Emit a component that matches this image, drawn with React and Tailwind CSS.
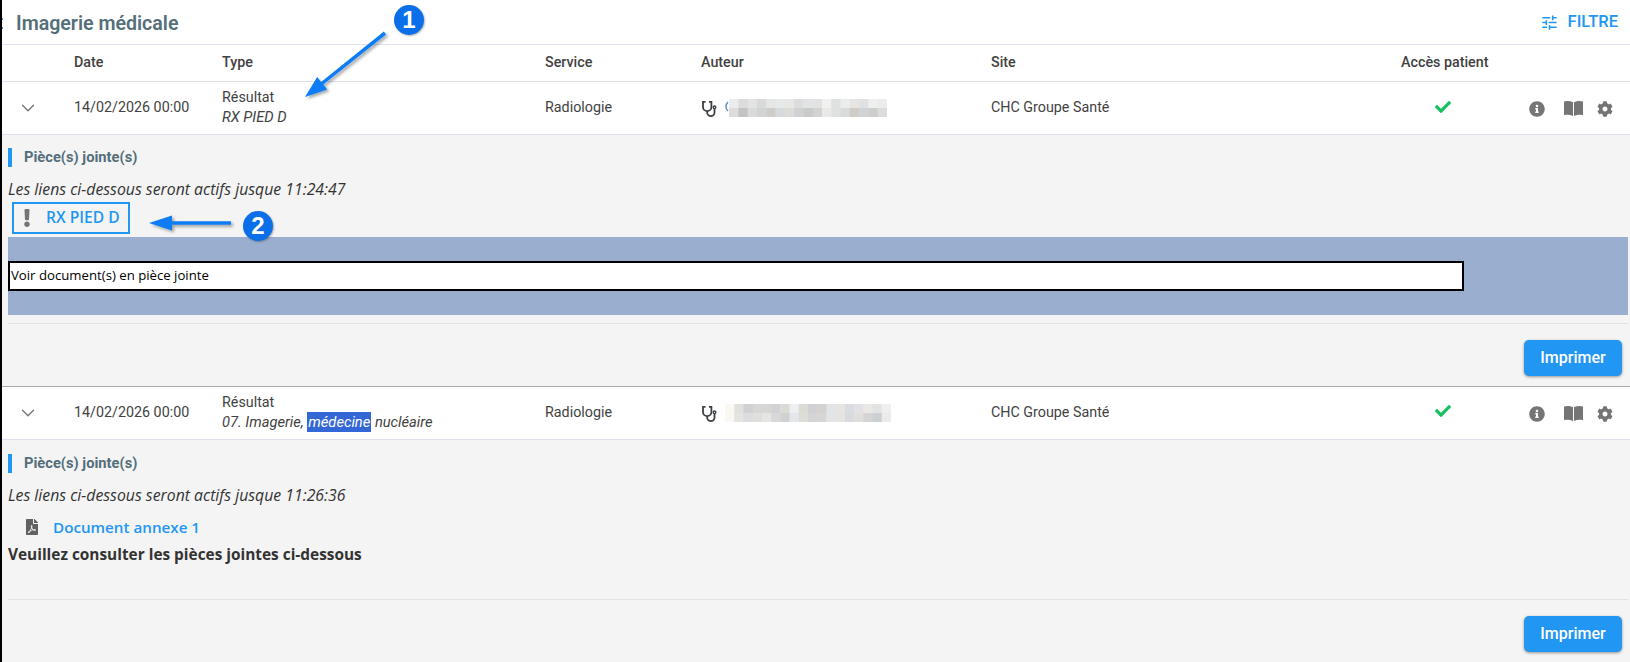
import React from "react";
import { FaInfoCircle, FaCog, FaCheck, FaFilePdf, FaExclamation } from "react-icons/fa";
import { ChevronDown } from "lucide-react";

const GRID = "grid grid-cols-[72px_148px_323px_156px_290px_410px_1fr] items-center";

const blur1 = [
  ["#eaecee", "#dcdcdc", "#e2e3e2", "#d8d9d9", "#e5e6e6", "#e6e8ea", "#e8e7e6", "#dedcdc", "#e1e3e7", "#e2e2e0", "#f0f1f0", "#dfe1e0", "#ebecec", "#e6e5e3", "#dfe1e3", "#eeefef", "#ececec"],
  ["#dddddd", "#c4c3c1", "#d9dbdb", "#d2d4d4", "#cfcdca", "#d6dadc", "#dedcd9", "#cfd1d3", "#c9cbca", "#d3d2d0", "#e8eae8", "#dfe1e1", "#d9dbda", "#cfccc8", "#cfd3d6", "#cdcdcb", "#dcdcdc"],
];

const blur2 = [
  ["#fbf8f3", "#e0e2e0", "#cfcfd4", "#d8d7d5", "#d6d6d4", "#d2d2d4", "#dbdbd6", "#eeeff1", "#dcdcd6", "#d0cfd3", "#d5d3d2", "#e2e4e7", "#e7e5e2", "#dadcdf", "#e2e2e4", "#e9e8e4", "#e2e3e3", "#efefef"],
  ["#fbf8f3", "#e4e4e2", "#dcdcdf", "#e0dfdd", "#e5e5e3", "#d9d7d9", "#d0d2d1", "#e4e7ea", "#dcddd6", "#d4d3d6", "#d8d6d5", "#e2e4e6", "#e6e4e1", "#d8dadd", "#dfe0dc", "#d6d3d3", "#cbd0d4", "#ebebeb"],
];

const Blur = ({ rows, width }) => {
  const cell = width / rows[0].length;
  return (
    <svg width={width} height="18" className="shrink-0">
      {rows.map((row, y) =>
        row.map((c, x) => (
          <rect key={x + "-" + y} x={x * cell} y={y * 9} width={cell + 0.5} height="9" fill={c} />
        ))
      )}
    </svg>
  );
};

const BookIcon = () => (
  <svg width="19" height="16" viewBox="0 0 19 16" fill="#757575">
    <path d="M0 1.500C3 .6 6.200.8 9 2.200V16C6.200 14.700 3 14.400 0 15.200zM19 1.500C16 .6 12.800.8 10 2.200V16c2.800-1.300 6-1.600 9-.8z" />
  </svg>
);

const StethoIcon = () => (
  <svg width="17" height="17" viewBox="0 0 17 17" fill="none" stroke="#3c4043" strokeWidth="1.800" className="shrink-0">
    <path d="M4.500 1.800H2V7a4.200 4.200 0 0 0 8.400 0V1.800H8" />
    <path d="M6.200 11.200v1.300a3.500 3.500 0 0 0 7.300 0V9" />
    <circle cx="13.500" cy="7.300" r="1.300" strokeWidth="1.400" />
  </svg>
);

const Row = ({ type, blur, blurWidth, gapClass, checkClass }) => (
  <div className={GRID + " h-[53px] bg-white border-b border-[#e0e0ee] text-[14.3px] text-[#424242]"}>
    <div className="pl-[15px] text-[#757575]">
      <ChevronDown size={22} strokeWidth={1.5} />
    </div>
    <div>14/02/2026 00:00</div>
    <div className="leading-[20px] -translate-y-px">
      <div>Résultat</div>
      <div className="italic text-[14.7px]">{type}</div>
    </div>
    <div>Radiologie</div>
    <div className={"flex items-center " + gapClass}>
      <StethoIcon />
      <Blur rows={blur} width={blurWidth} />
    </div>
    <div>CHC Groupe Santé</div>
    <div className={"w-[84px] flex justify-center text-[#16c060] " + checkClass}>
      <FaCheck size={16} />
    </div>
  </div>
);

const Actions = () => (
  <div className="absolute right-[17px] top-0 h-full flex items-center text-[#757575]">
    <FaInfoCircle size={16} />
    <div className="ml-[19px] mr-[14px] -translate-y-px">
      <BookIcon />
    </div>
    <FaCog size={16} />
  </div>
);

const AttachmentTitle = () => (
  <div className="flex items-center h-[19px] border-l-4 border-[#2196f3] pl-[12px] font-['Roboto',sans-serif] font-bold text-[14.7px] text-[#546e7a]">
    Pièce(s) jointe(s)
  </div>
);

const PrintButton = () => (
  <div className="flex justify-end pr-[8px]">
    <button className="w-[98px] h-[36px] rounded-[5px] bg-[#2196f3] text-white text-[16px] font-medium shadow-[0_1px_3px_rgba(0,0,0,0.4)]">
      Imprimer
    </button>
  </div>
);

const Annotation = ({ className, n }) => (
  <div className={"absolute w-[30px] h-[30px] rounded-full bg-[#0a6fe8] text-white flex items-center justify-center font-['Liberation_Sans',sans-serif] font-bold text-[24px] shadow-[1px_1px_2px_rgba(0,0,0,0.3)] " + className}>
    {n}
  </div>
);

export default function App() {
  return (
    <div className="relative w-[1630px] h-[662px] overflow-hidden flex bg-[#f4f4f4] font-['Roboto',sans-serif]">
      <div className="w-[2px] bg-black shrink-0" />
      <div className="flex-1 min-w-0">
        <div className="h-[45px] bg-white border-b border-[#e0e0ee] flex items-center justify-between pl-[14px] pr-[12px]">
          <h1 className="text-[19.6px] font-semibold text-[#546e7a] translate-y-[2px]">Imagerie médicale</h1>
          <div className="flex items-center gap-[9px] text-[#2196f3] text-[16.5px] font-medium">
            <svg width="19" height="19" viewBox="0 0 24 24" fill="currentColor">
              <path d="M3 17v2h6v-2H3zM3 5v2h10V5H3zm10 16v-2h8v-2h-8v-2h-2v6h2zM7 9v2H3v2h4v2h2V9H7zm14 4v-2H11v2h10zm-6-4h2V7h4V5h-4V3h-2v6z" />
            </svg>
            FILTRE
          </div>
        </div>
        <div className={GRID + " h-[37px] bg-white border-b border-[#e0e0ee] text-[14.3px] font-medium text-[#424242]"}>
          <div />
          <div>Date</div>
          <div>Type</div>
          <div>Service</div>
          <div>Auteur</div>
          <div>Site</div>
          <div className="whitespace-nowrap">Accès patient</div>
        </div>

        <div className="relative">
          <Row type="RX PIED D" blur={blur1} blurWidth={158} gapClass="gap-[11px]" checkClass="-translate-y-px" />
          <Actions />
        </div>
        <div className="h-[252px] pl-[6px] pr-[2px] pt-[13px] border-b border-[#aaaaaa]">
          <AttachmentTitle />
          <p className="mt-[12px] font-['Open_Sans',sans-serif] italic text-[15.8px] leading-[20px] text-[#333333] whitespace-nowrap">
            Les liens ci-dessous seront actifs jusque 11:24:47
          </p>
          <div className="mt-[3px] ml-[4px] w-[118px] h-[32px] border-2 border-[#2196f3] flex items-center pl-[4px] gap-[10px]">
            <FaExclamation size={18} className="text-[#757575] shrink-0" />
            <span className="font-['Open_Sans',sans-serif] text-[15.6px] font-semibold text-[#2196f3] whitespace-nowrap">RX PIED D</span>
          </div>
          <div className="mt-[3px] h-[78px] bg-[#9aaed0] pt-[24px]">
            <div className="w-[1456px] h-[30px] bg-white border-2 border-black flex items-center pl-[1px] font-['Open_Sans',sans-serif] text-[13.2px] text-black">
              Voir document(s) en pièce jointe
            </div>
          </div>
          <div className="mt-[8px] h-px bg-[#e2e2e2]" />
          <div className="mt-[16px] -mr-[2px]">
            <PrintButton />
          </div>
        </div>

        <div className="relative">
          <Row
            type={
              <>
                07. Imagerie, <span className="inline-block bg-[#3367d6] text-white px-[1px]">médecine </span> nucléaire
              </>
            }
            blur={blur2}
            blurWidth={166}
            gapClass="gap-[7px]"
            checkClass="-translate-y-[2px]"
          />
          <Actions />
        </div>
        <div className="pl-[6px] pr-[2px] pt-[14px]">
          <AttachmentTitle />
          <p className="mt-[12px] font-['Open_Sans',sans-serif] italic text-[15.8px] leading-[20px] text-[#333333] whitespace-nowrap">
            Les liens ci-dessous seront actifs jusque 11:26:36
          </p>
          <div className="mt-[12px] ml-[16px] h-[20px] flex items-center gap-[13px]">
            <FaFilePdf size={16} className="text-[#616161]" />
            <span className="font-['Open_Sans',sans-serif] text-[15.2px] font-semibold text-[#2196f3]">Document annexe 1</span>
          </div>
          <p className="mt-[8px] font-['Open_Sans',sans-serif] font-bold text-[15.4px] leading-[20px] text-[#333333]">
            Veuillez consulter les pièces jointes ci-dessous
          </p>
          <div className="mt-[34px] h-px bg-[#e2e2e2]" />
          <div className="mt-[16px] -mr-[2px]">
            <PrintButton />
          </div>
        </div>
      </div>

      <svg className="absolute left-0 top-0 pointer-events-none" width="1630" height="662">
        <defs>
          <filter id="sh" x="-20%" y="-20%" width="140%" height="140%">
            <feDropShadow dx="2" dy="2" stdDeviation="1.5" floodColor="#000" floodOpacity="0.35" />
          </filter>
        </defs>
        <rect x="2" y="18" width="1" height="2" fill="#2196f3" />
        <rect x="2" y="27" width="1" height="2" fill="#2196f3" />
        <path d="M728 102a6 6 0 0 0 0 9" fill="none" stroke="#5b8fc0" strokeWidth="1.500" />
        <g filter="url(#sh)" fill="#0a7cf5">
          <path d="M386.100 34.400L323.300 84.600l3.900 4.900L305 97l12.200-20 3.900 4.900L383.900 31.600z" />
          <path d="M149 223l23-7.500v5.700h59v3.600h-59v5.700z" />
        </g>
      </svg>
      <Annotation className="left-[394px] top-[5px]" n="1" />
      <Annotation className="left-[243px] top-[211px]" n="2" />
    </div>
  );
}
